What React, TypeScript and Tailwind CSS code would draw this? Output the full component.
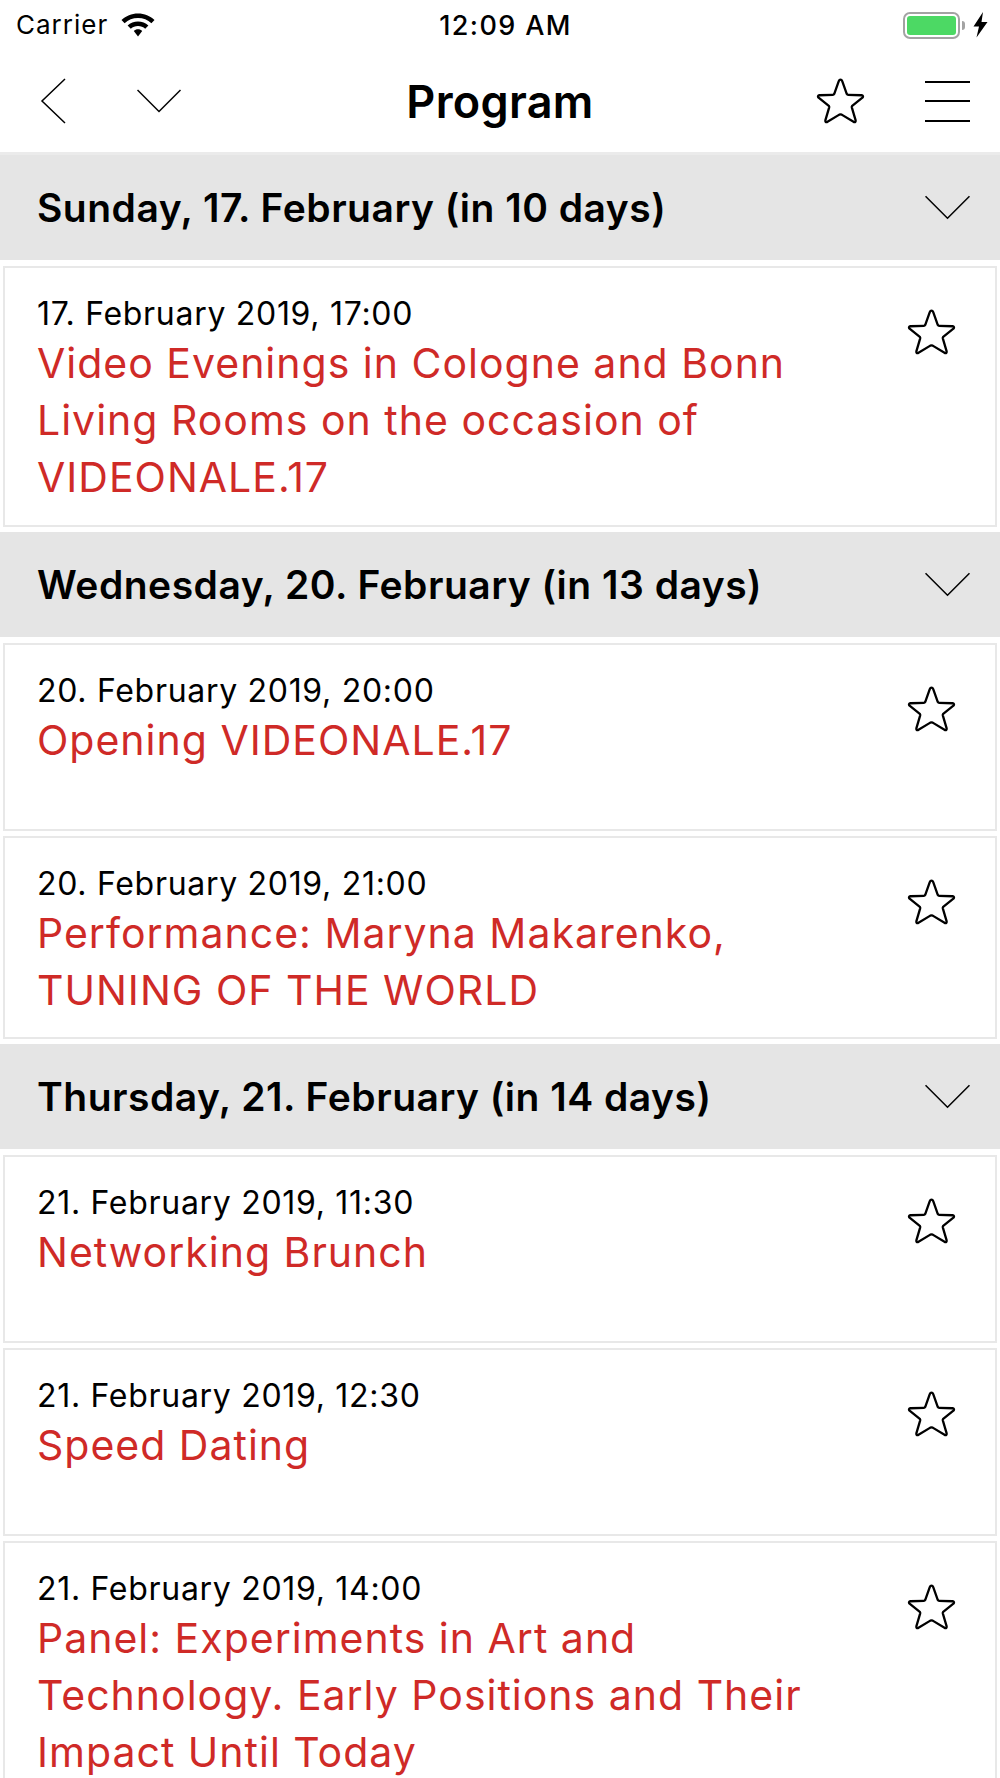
const font = "font-['Inter',sans-serif]";

function Chevron({ className }: { className: string }) {
  return (
    <svg viewBox="0 0 44 24" className={className} fill="none" stroke="#000" strokeWidth="1.5">
      <path d="M0.5 1 L22 22.5 L43.5 1" />
    </svg>
  );
}

function Star({ className }: { className: string }) {
  return (
    <svg viewBox="0 0 50 48" className={className} fill="none" stroke="#000" strokeWidth="2.4" strokeLinejoin="round">
      <path d="M25 1.6 Q26.2 1.6 26.8 3.2 L31.6 16.8 Q32 17.6 33 17.6 L47 18 Q49.2 18.4 48.2 20.2 L37.2 29 Q36.6 29.6 36.8 30.6 L40.8 44.2 Q41 46.6 39 46 L26.2 38.2 Q25 37.6 23.8 38.2 L11 46 Q9 46.6 9.2 44.2 L13.2 30.6 Q13.4 29.6 12.8 29 L1.8 20.2 Q0.8 18.4 3 18 L17 17.6 Q18 17.6 18.4 16.8 L23.2 3.2 Q23.8 1.6 25 1.6 Z" />
    </svg>
  );
}

function StatusBar() {
  return (
    <div className="flex h-[50px] items-center justify-between pl-4 pr-3">
      <div className="flex w-[300px] items-center gap-[13px]">
        <span className="text-[26px] leading-none tracking-[1px] text-black">Carrier</span>
        <svg viewBox="0 0 34 24" className="h-[24px] w-[34px]" fill="#000">
          <path d="M17 0.5 C10.5 0.5 5 3 0.5 7 L3.6 10.2 C7.2 6.9 11.8 5 17 5 C22.2 5 26.8 6.9 30.4 10.2 L33.5 7 C29 3 23.5 0.5 17 0.5 Z" />
          <path d="M17 8.4 C13 8.4 9.4 9.9 6.6 12.5 L9.8 15.7 C11.7 14 14.2 13 17 13 C19.8 13 22.3 14 24.2 15.7 L27.4 12.5 C24.6 9.9 21 8.4 17 8.4 Z" />
          <path d="M17 16.2 C15.4 16.2 13.9 16.8 12.8 17.9 L17 23.5 L21.2 17.9 C20.1 16.8 18.6 16.2 17 16.2 Z" />
        </svg>
      </div>
      <span className="ml-[7px] text-[27px] font-medium leading-none tracking-[1.4px] text-black">12:09 AM</span>
      <div className="flex w-[300px] items-center justify-end gap-[8px]">
        <div className="flex items-center">
          <div className="flex h-[27px] w-[57px] items-center rounded-[7px] border-2 border-[#a3a3a3] p-[2px]">
            <div className="h-full w-full rounded-[3px] bg-[#4cd964]" />
          </div>
          <div className="ml-[2px] h-[9px] w-[3px] rounded-r-full bg-[#a3a3a3]" />
        </div>
        <svg viewBox="0 0 15 26" className="h-[26px] w-[15px]" fill="#000">
          <path d="M10 0 L0.5 14.5 L6 14.5 L3.5 25.5 L14.5 10 L8.5 10 Z" />
        </svg>
      </div>
    </div>
  );
}

function NavBar() {
  return (
    <div className="flex h-[105px] items-center justify-between border-b-[3px] border-[#ebebeb] pl-[39px] pr-[30px]">
      <div className="flex w-[250px] items-center">
        <svg viewBox="0 0 26 46" className="ml-[1px] h-[46px] w-[26px]" fill="none" stroke="#000" strokeWidth="1.5">
          <path d="M25 1 L2 23 L25 45" />
        </svg>
        <Chevron className="ml-[71px] h-[24px] w-[44px]" />
      </div>
      <h1 className="ml-[-9px] text-[45px] font-semibold leading-none tracking-[0.3px] text-black">Program</h1>
      <div className="flex w-[250px] items-center justify-end gap-[60px]">
        <Star className="h-[46px] w-[49px]" />
        <div className="flex h-[41px] w-[45px] flex-col justify-between">
          <div className="h-[2px] bg-black" />
          <div className="h-[2px] bg-black" />
          <div className="h-[2px] bg-black" />
        </div>
      </div>
    </div>
  );
}

function DayHeader({ label }: { label: string }) {
  return (
    <div className="flex h-[105px] items-center justify-between bg-[#e5e5e5] pl-[37px] pr-[30px]">
      <span className="text-[39px] font-semibold leading-none tracking-[0.5px] text-black">{label}</span>
      <Chevron className="h-[25px] w-[45px]" />
    </div>
  );
}

function EventCard({ date, title, height }: { date: string; title: string[]; height: string }) {
  return (
    <div className={`flex justify-between border-2 border-[#e8e8e8] bg-white pl-[32px] pr-[39px] pt-[25px] ${height}`}>
      <div>
        <div className="text-[32px] leading-[42px] tracking-[0.7px] text-black">{date}</div>
        {title.map((line) => (
          <div key={line} className="text-[41px] leading-[57px] tracking-[1px] text-[#cf2a27]">
            {line}
          </div>
        ))}
      </div>
      <Star className="mt-[16px] h-[46px] w-[49px]" />
    </div>
  );
}

const days = [
  {
    label: "Sunday, 17. February (in 10 days)",
    events: [
      {
        date: "17. February 2019, 17:00",
        title: ["Video Evenings in Cologne and Bonn", "Living Rooms on the occasion of", "VIDEONALE.17"],
        height: "h-[261px]",
      },
    ],
  },
  {
    label: "Wednesday, 20. February (in 13 days)",
    events: [
      { date: "20. February 2019, 20:00", title: ["Opening VIDEONALE.17"], height: "h-[188px]" },
      {
        date: "20. February 2019, 21:00",
        title: ["Performance: Maryna Makarenko,", "TUNING OF THE WORLD"],
        height: "h-[203px]",
      },
    ],
  },
  {
    label: "Thursday, 21. February (in 14 days)",
    events: [
      { date: "21. February 2019, 11:30", title: ["Networking Brunch"], height: "h-[188px]" },
      { date: "21. February 2019, 12:30", title: ["Speed Dating"], height: "h-[188px]" },
      {
        date: "21. February 2019, 14:00",
        title: ["Panel: Experiments in Art and", "Technology. Early Positions and Their", "Impact Until Today"],
        height: "h-[261px]",
      },
    ],
  },
];

export default function App() {
  return (
    <div className={`h-[1778px] w-[1000px] overflow-hidden bg-white ${font}`}>
      <StatusBar />
      <NavBar />
      {days.map((day) => (
        <div key={day.label}>
          <DayHeader label={day.label} />
          <div className="flex flex-col gap-[5px] px-[3px] pb-[5px] pt-[6px]">
            {day.events.map((event) => (
              <EventCard key={event.date} {...event} />
            ))}
          </div>
        </div>
      ))}
    </div>
  );
}
